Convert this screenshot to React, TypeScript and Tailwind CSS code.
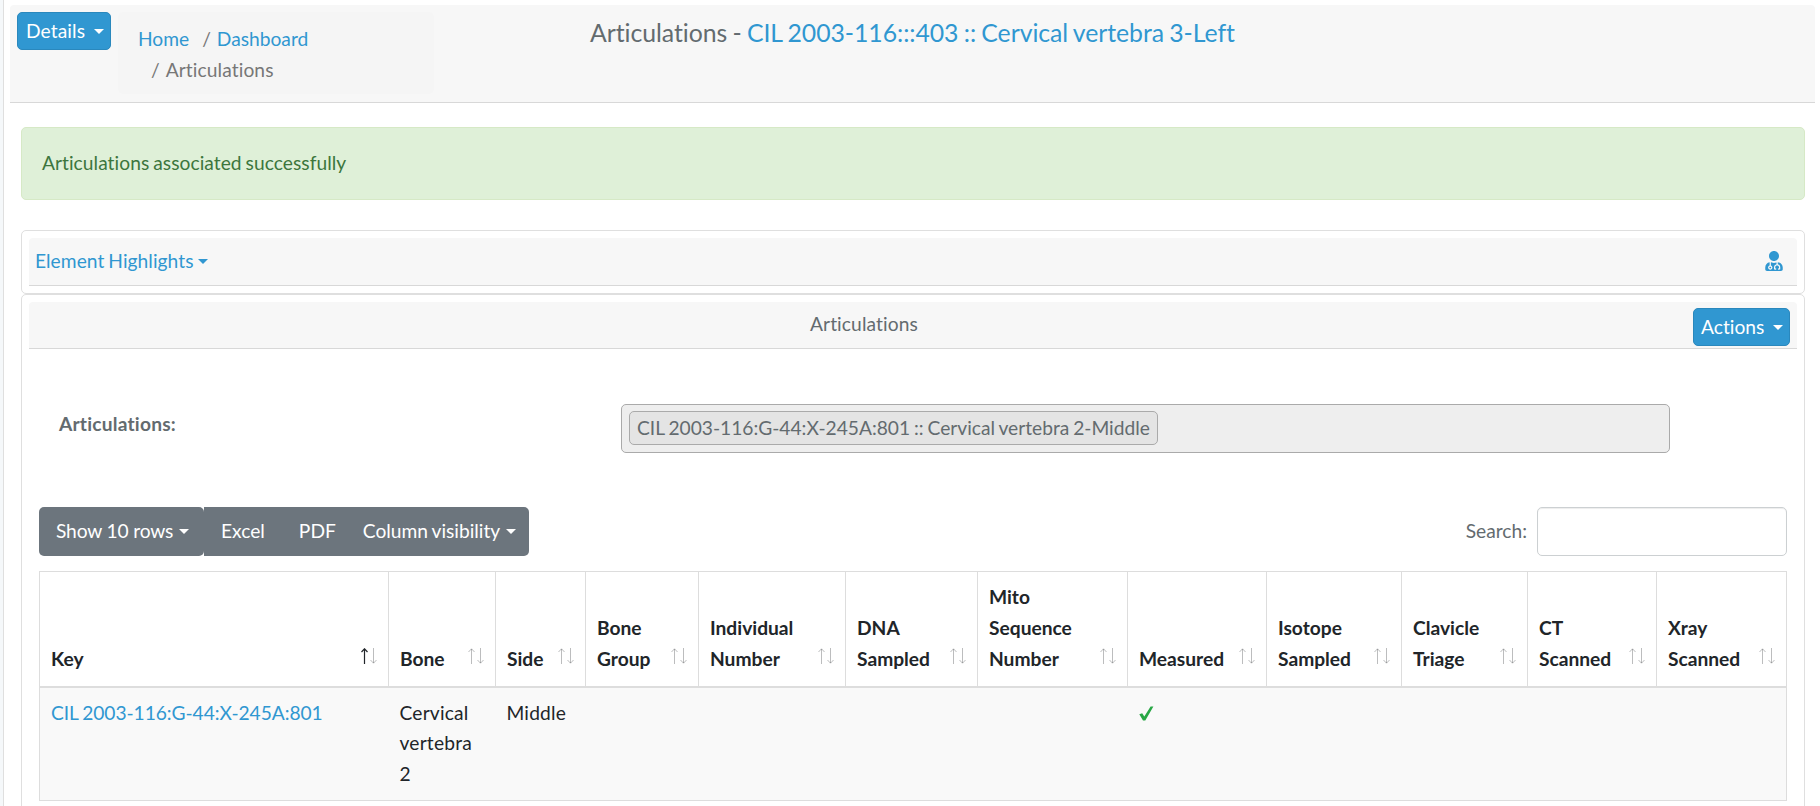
import React from "react";
import { FaUserMd } from "react-icons/fa";

const columns = [
  { label: "Key", width: 349, lines: ["Key"] },
  { label: "Bone", width: 107, lines: ["Bone"] },
  { label: "Side", width: 90, lines: ["Side"] },
  { label: "Bone Group", width: 113, lines: ["Bone", "Group"] },
  { label: "Individual Number", width: 147, lines: ["Individual", "Number"] },
  { label: "DNA Sampled", width: 132, lines: ["DNA", "Sampled"] },
  { label: "Mito Sequence Number", width: 150, lines: ["Mito", "Sequence", "Number"] },
  { label: "Measured", width: 139, lines: ["Measured"] },
  { label: "Isotope Sampled", width: 135, lines: ["Isotope", "Sampled"] },
  { label: "Clavicle Triage", width: 126, lines: ["Clavicle", "Triage"] },
  { label: "CT Scanned", width: 129, lines: ["CT", "Scanned"] },
  { label: "Xray Scanned", width: 130, lines: ["Xray", "Scanned"] },
];

function Caret({ className = "" }: { className?: string }) {
  return (
    <span
      className={`inline-block h-0 w-0 border-x-[5px] border-t-[5px] border-x-transparent border-t-current ${className}`}
    />
  );
}

function SortArrows({ active }: { active: boolean }) {
  return (
    <svg
      className="absolute right-[10px] bottom-[22px]"
      width="17"
      height="16"
      viewBox="0 0 17 16"
      fill="none"
      stroke="#212529"
    >
      <path
        d="M3.5 16V1M0.5 4L3.5 0.8L6.5 4"
        opacity={active ? 1 : 0.3}
        strokeWidth={active ? 1.2 : 1}
      />
      <path d="M12.5 0V15M9.5 12L12.5 15.2L15.5 12" opacity="0.3" />
    </svg>
  );
}

export default function App() {
  return (
    <div className="flex h-[806px] w-[1820px] overflow-hidden bg-[#f5f8fa] font-[Lato,sans-serif] text-[19.2px] leading-[30.72px] text-[#636b6f] [font-variant-ligatures:none] [word-spacing:-1px]">
      <main className="ml-[3px] flex flex-1 flex-col border-l border-[#dfdfdf] bg-white pt-[5px] pr-[5px] pl-[6px]">
        <header className="flex h-[98px] shrink-0 items-start rounded-t-[4px] border-b border-[#d8d8d8] bg-[#f7f7f7] pt-[7px] pl-[7px]">
          <button className="flex h-[38px] w-[94px] shrink-0 items-center rounded-[5px] border border-[#2a88bd] bg-[#3097d1] pl-[8px] text-white">
            <span className="tracking-[0.1px]">Details</span>
            <Caret className="ml-[9px]" />
          </button>
          <nav className="ml-[7px] h-[82px] w-[316px] shrink-0 rounded-[5px] bg-[#f5f5f5] pt-[12px] pl-5">
            <div className="flex">
              <a className="text-[#3097d1]">Home</a>
              <span className="ml-[13px] text-[#777]">/</span>
              <a className="ml-[6px] text-[#3097d1]">Dashboard</a>
            </div>
            <div className="flex text-[#777]">
              <span className="ml-[13px]">/</span>
              <span className="ml-[6px] tracking-[0.1px]">Articulations</span>
            </div>
          </nav>
          <h1 className="ml-[156px] pt-[5px] text-[24.8px] leading-[31px] tracking-[-0.05px] whitespace-nowrap">
            Articulations - <a className="text-[#3097d1]">CIL 2003-116:::403 :: Cervical vertebra 3-Left</a>
          </h1>
        </header>

        <div className="mt-6 mr-[10px] ml-[11px] flex h-[73px] shrink-0 items-center rounded-[5px] border border-[#d6e9c6] bg-[#dff0d8] pl-5 tracking-[0.05px] text-[#3c763d]">
          Articulations associated successfully
        </div>

        <section className="mt-[30px] mr-[10px] ml-[11px] h-16 shrink-0 rounded-[5px] border border-[#dfdfdf] p-[7px]">
          <div className="flex h-12 items-center justify-between rounded-t-[4px] border-b border-[#d8d8d8] bg-[#f7f7f7] pr-[13px] pl-[6px] text-[#3097d1]">
            <span className="flex items-center">
              <span className="tracking-[0.05px]">Element Highlights</span>
              <Caret className="ml-[4px]" />
            </span>
            <FaUserMd size={20} className="mb-px" />
          </div>
        </section>

        <section className="mr-[10px] ml-[11px] h-[540px] shrink-0 rounded-[5px] border border-[#dfdfdf] p-[7px]">
          <div className="flex h-[47px] justify-end rounded-t-[4px] border-b border-[#d8d8d8] bg-[#f7f7f7] pr-[7px]">
            <h2 className="flex-1 pt-[7px] pl-[781px] tracking-[0.1px]">Articulations</h2>
            <button className="mt-[6px] flex h-[38px] w-[97px] shrink-0 items-center rounded-[5px] border border-[#2a88bd] bg-[#3097d1] pl-[7px] text-white">
              Actions
              <Caret className="ml-[9px]" />
            </button>
          </div>

          <div className="mt-[55px] flex">
            <label className="w-[592px] pt-[5px] pl-[30px] font-bold tracking-[0.2px]">Articulations:</label>
            <div className="flex h-[49px] w-[1049px] items-start rounded-[5px] border border-[#aaa] bg-[#eee] py-[6px] pl-[7px]">
              <span className="flex h-[34px] w-[529px] items-center rounded-[5px] border border-[#aaa] bg-[#e4e4e4] pl-[7px] whitespace-nowrap">
                CIL 2003-116:G-44:X-245A:801 :: Cervical vertebra 2-Middle
              </span>
            </div>
          </div>

          <div className="mt-[54px] flex justify-between pr-[10px] pl-[10px]">
            <div className="flex text-white">
              <button className="flex h-[49px] w-[165px] items-center rounded-[5px] bg-[#6c757d] pl-[17px]">
                <span className="tracking-[-0.15px]">Show 10 rows</span>
                <Caret className="ml-[6px]" />
              </button>
              <div className="flex h-[49px] w-[325px] items-center rounded-r-[5px] bg-[#6c757d] whitespace-nowrap">
                <span className="ml-[17px]">Excel</span>
                <span className="ml-[34px]">PDF</span>
                <span className="ml-[27px]">Column visibility</span>
                <Caret className="ml-[6px]" />
              </div>
            </div>
            <label className="flex items-center">
              Search:
              <input className="ml-[10px] h-[49px] w-[250px] rounded-[5px] border border-[#ccd0d2] bg-white shadow-[inset_0_1px_1px_rgba(0,0,0,0.075)]" />
            </label>
          </div>

          <table className="mt-[15px] ml-[10px] w-[1748px] table-fixed border-collapse border border-[#dddddd] text-left text-[#212529]">
            <colgroup>
              {columns.map((c) => (
                <col key={c.label} style={{ width: c.width }} />
              ))}
            </colgroup>
            <thead>
              <tr className="h-[115px]">
                {columns.map((c, i) => (
                  <th
                    key={c.label}
                    className="relative border border-b-2 border-[#dddddd] px-[11px] pb-[11px] align-bottom font-bold"
                  >
                    {c.lines.map((line) => (
                      <div key={line}>{line}</div>
                    ))}
                    <SortArrows active={i === 0} />
                  </th>
                ))}
              </tr>
            </thead>
            <tbody>
              <tr className="h-[114px] bg-[#f9f9f9] align-top">
                <td className="px-[11px] pt-[10px] tracking-[-0.05px] text-[#3097d1]">CIL 2003-116:G-44:X-245A:801</td>
                <td className="px-[11px] pt-[10px] tracking-[0.2px]">Cervical vertebra 2</td>
                <td className="px-[11px] pt-[10px] tracking-[0.2px]">Middle</td>
                <td colSpan={4} />
                <td className="px-[11px] pt-[18px]">
                  <svg width="15" height="15" viewBox="0 0 15 15" fill="#28a745">
                    <path d="M0.3 8.3L3.2 7.2L5.3 10.6L11.6 0.4H14.4L6.3 14.6H4Z" />
                  </svg>
                </td>
                <td colSpan={4} />
              </tr>
            </tbody>
          </table>
        </section>
      </main>
    </div>
  );
}
